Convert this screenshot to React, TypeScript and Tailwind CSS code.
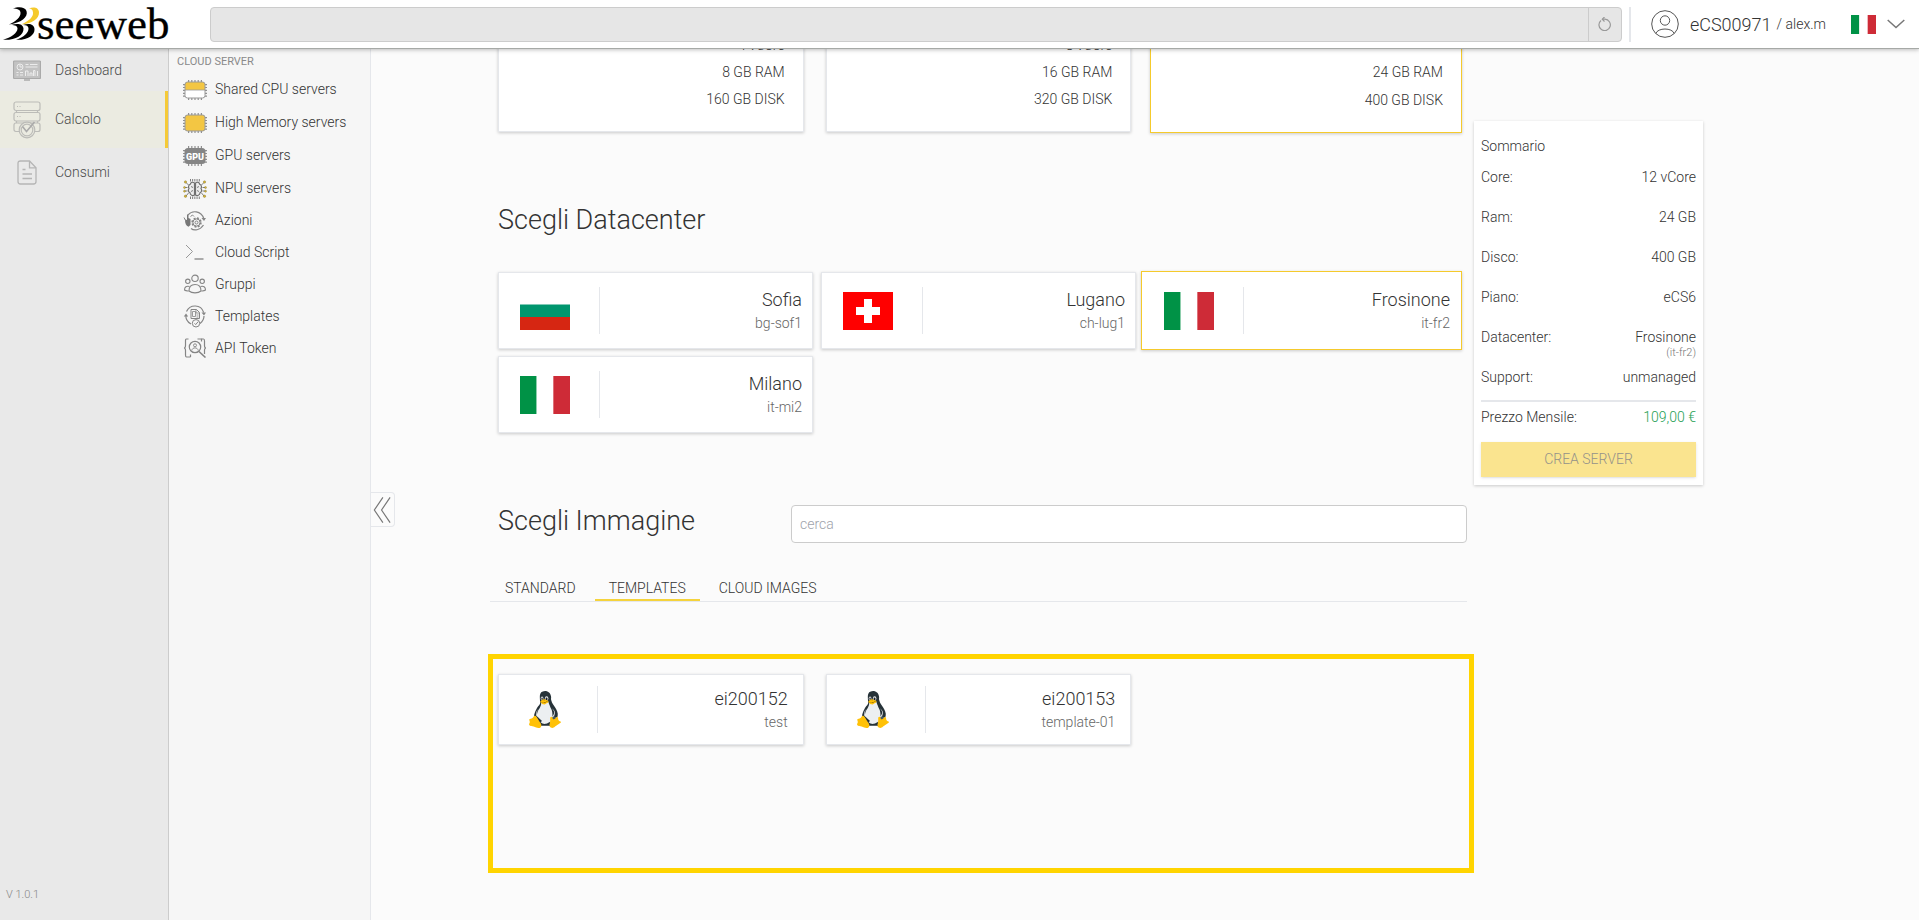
import type { ReactNode } from "react"
import { FcLinux } from "react-icons/fc"

const PINS = "#8f8f8f"

function Logo() {
  return (
    <a href="/" aria-label="seeweb" className="flex h-12 w-[200px] shrink-0 items-center pl-[3px]">
      <svg viewBox="0 0 170 48" className="h-12 w-[170px]">
        <path d="M10 8.500C15 6.500 22 6.500 23.500 11C25.500 17 18 23 6 24.500C13 21.500 18 17 17.500 12.500C17.200 9.500 14 8.500 10 8.500Z" fill="#000" />
        <path d="M26 8.500C30 6.500 35.500 7 36 12C36.500 18.500 29 24 18 24.500C26 21 30.500 17 30 12.500C29.700 9.500 28.500 8.500 26 8.500Z" fill="#f5ca2c" />
        <path d="M8 25C14 23 20 23.500 20.500 28.500C21 35.500 12 40.500 0 39.800C8 37.500 14.500 33 14.500 28.500C14.500 26 12 25 8 25Z" fill="#000" />
        <path d="M20 25C26 23 31 24 31.500 29C32 35.500 24 40.500 13 39.800C21 37 25.500 33 25.500 28.500C25.500 26 23.500 25 20 25Z" fill="#000" />
        <text x="34" y="39" fontFamily="'Liberation Serif', serif" fontSize="45" fill="#000" stroke="#000" strokeWidth="0.3">seeweb</text>
      </svg>
    </a>
  )
}

function Italy() {
  return (
    <svg viewBox="0 0 30 20" preserveAspectRatio="none" className="size-full">
      <path d="M0 0h10v20H0z" fill="#009246" />
      <path d="M10 0h10v20H10z" fill="#fff" />
      <path d="M20 0h10v20H20z" fill="#ce2b37" />
    </svg>
  )
}

function Bulgaria() {
  return (
    <svg viewBox="0 0 50 38" preserveAspectRatio="none" className="size-full">
      <path d="M0 0h50v13H0z" fill="#fff" />
      <path d="M0 12.500h50V25H0z" fill="#00966e" />
      <path d="M0 25h50v13H0z" fill="#d62612" />
    </svg>
  )
}

function Switzerland() {
  return (
    <svg viewBox="0 0 50 38" preserveAspectRatio="none" className="size-full">
      <path d="M0 0h50v38H0z" fill="#f00" />
      <path d="M21 7h8v8h8v8h-8v8h-8v-8h-8v-8h8z" fill="#fff" />
    </svg>
  )
}

function Chip({ children }: { children: ReactNode }) {
  return (
    <svg viewBox="0 0 24 20" className="h-5 w-6">
      <path d="M5 1h14M5 19h14" stroke={PINS} strokeWidth="2" strokeDasharray="1.200 2" />
      <path d="M1 4v13M23 4v13" stroke={PINS} strokeWidth="2" strokeDasharray="1.200 1.700" />
      {children}
    </svg>
  )
}

function SharedCpuIcon() {
  return (
    <Chip>
      <rect x="2" y="2" width="20" height="16" rx="2.500" fill="#fff" />
      <path d="M2 10V4.500A2.500 2.500 0 0 1 4.500 2h15A2.500 2.500 0 0 1 22 4.500V10z" fill="#f3c643" />
      <path d="M2 10h20" stroke="#999" strokeWidth="0.800" />
      <rect x="2" y="2" width="20" height="16" rx="2.500" fill="none" stroke="#999" />
    </Chip>
  )
}

function HighMemoryIcon() {
  return (
    <Chip>
      <rect x="2" y="2" width="20" height="16" rx="2.500" fill="#f3c643" stroke="#999" />
    </Chip>
  )
}

function GpuIcon() {
  return (
    <Chip>
      <rect x="1.500" y="2" width="21" height="16" rx="3.500" fill="#858585" />
      <text x="12" y="13.500" textAnchor="middle" fontFamily="Roboto, sans-serif" fontWeight="900" fontSize="9" fill="#fff">GPU</text>
    </Chip>
  )
}

function NpuIcon() {
  return (
    <svg viewBox="0 0 24 20" className="h-5 w-6" fill="none" stroke="#707070" strokeWidth="0.900">
      <path d="M7 1.200h11M7 18.800h11" strokeWidth="2.400" strokeDasharray="0.900 1.300" />
      <path d="M11.500 4C9.500 2.500 7.500 3.500 7.300 5.300C5.500 6 5 8 6 9.300C4.800 11 5.300 13 7 13.800C7 16.200 9.800 17.300 11.500 16zM12.500 4C14.500 2.500 16.500 3.500 16.700 5.300C18.500 6 19 8 18 9.300C19.200 11 18.700 13 17 13.800C17 16.200 14.200 17.300 12.500 16z" fill="#ececec" strokeWidth="1.200" />
      <path d="M8 7.500l2 1M8 12.500l2-1M16 7.500l-2 1M16 12.500l-2-1" />
      <path d="M5.500 6L3 3.500M4.500 8.500H1.500M4.500 12H1.500M5.500 14L3 17M18.500 6L21 3.500M19.500 8.500h3M19.500 12h3M18.500 14l2.500 3" />
      <g fill="#d8b52f" stroke="#7a7040" strokeWidth="0.400">
        <circle cx="2.500" cy="3" r="1.200" />
        <circle cx="1.500" cy="8.500" r="1" />
        <circle cx="1.500" cy="12.200" r="1" />
        <circle cx="2.500" cy="17.200" r="1.200" />
        <circle cx="21.500" cy="3" r="1.200" />
        <circle cx="22.500" cy="8.500" r="1" />
        <circle cx="22.500" cy="12.200" r="1" />
        <circle cx="21.500" cy="17.200" r="1.200" />
      </g>
    </svg>
  )
}

function ActionsIcon() {
  return (
    <svg viewBox="0 0 24 20" className="h-5 w-6" fill="none" stroke="#858585">
      <path d="M5 4C9-1 18-.5 20.800 7.500M20.500 14C17 19.500 11 20 8 17.500" strokeWidth="1.200" />
      <path d="M18.500 7h4.500l-2 3z" fill="#858585" stroke="none" />
      <path d="M2 8.500c0 4 1 6 3.500 7.200L7.500 14V8L5.500 7V3.500H4V9z" fill="#777" stroke="none" />
      <path d="M1 6.500l2 4M7.500 5.500l2-1.500 1.500 1.500" />
      <circle cx="13.500" cy="11.500" r="4.300" strokeWidth="1.800" strokeDasharray="1.900 1.470" />
      <circle cx="13.500" cy="11.500" r="3.600" />
      <circle cx="13.500" cy="11.500" r="1.500" />
    </svg>
  )
}

function ScriptIcon() {
  return (
    <svg viewBox="0 0 24 20" className="h-5 w-6" fill="none" stroke="#999">
      <path d="M3 3l6.500 6.500L3 16" />
      <path d="M11.500 17h9" strokeWidth="1.600" />
    </svg>
  )
}

function GroupsIcon() {
  return (
    <svg viewBox="0 0 24 20" className="h-5 w-6" fill="none" stroke="#858585" strokeWidth="1.100">
      <circle cx="12" cy="4.300" r="3.200" />
      <circle cx="4.800" cy="7.300" r="2.200" />
      <circle cx="19.200" cy="7.300" r="2.200" />
      <path d="M6 17c0-4 2-6.500 6-6.500s6 2.500 6 6.500c-3 2.500-9 2.500-12 0z" />
      <path d="M6.500 12.500c-3-1-5 .5-5 3.500 1 .8 2.500 1 4 .9M17.500 12.500c3-1 5 .5 5 3.500-1 .8-2.500 1-4 .9" />
    </svg>
  )
}

function TemplatesIcon() {
  return (
    <svg viewBox="0 0 24 23" className="h-[23px] w-6" fill="none" stroke="#858585">
      <path d="M3.500 6.500C7-1 18-1 20.700 7.500M3 10c-.5 4 1.500 7 5 9M21 11c0 3-1.500 5.500-4 7.500" strokeWidth="1.200" />
      <path d="M18.500 7.500h4.500l-2 3zM.8 11.500L3 8.500l2.200 3z" fill="#858585" stroke="none" />
      <path d="M8 13.500v-9h5.500l3 3v6z" />
      <path d="M9.500 6.500h3v5h-3zM13 4.500v3.500h3.500M13.500 10h2M13.500 12h2" strokeWidth="0.800" />
      <circle cx="13" cy="18.300" r="3.700" fill="#f6f6f6" />
      <path d="M11.500 18.300l1.200 1.300 2.500-3" />
    </svg>
  )
}

function TokenIcon() {
  return (
    <svg viewBox="0 0 24 20" className="h-5 w-6" fill="none" stroke="#858585" strokeWidth="1.200">
      <path d="M5.500 1H3.500C2.500 1 2.500 2 2.500 3v4.500c0 1.500-.5 2.500-1.500 2.500 1 0 1.500 1 1.500 2.500V17c0 1 0 2 1 2h4M18.500 1h2c1 0 1 1 1 2v4.500c0 1.500.5 2.500 1.500 2.500-1 0-1.500 1-1.500 2.500V16" />
      <path d="M14.500 1h4v2.500M7.500 19v-2.500" />
      <circle cx="12" cy="9" r="5.700" />
      <path d="M16 13.500l6.500 6" strokeWidth="1.600" />
      <circle cx="12" cy="7.300" r="1.500" strokeWidth="0.900" />
      <path d="M8.800 12.500c.4-3.500 6-3.500 6.400 0" strokeWidth="0.900" />
    </svg>
  )
}

function DashboardIcon() {
  return (
    <svg viewBox="0 0 28 21" className="h-[21px] w-7" fill="none" stroke="#aaa">
      <rect x="0.500" y="1" width="27" height="17.500" rx="1" fill="#c2c2c2" strokeWidth="1.200" />
      <path d="M11 20h6" strokeWidth="1.500" />
      <g stroke="#ececec">
        <circle cx="7" cy="7" r="3" />
        <path d="M7 4.500V7h2.500M12.500 4.500h3M17 4.500h7.500M12.500 7h12M3.500 12.500h2M7 12.500h3M3.500 15h2M7 15h3" />
        <path d="M12.500 16v-5h2.500v5M17 16v-3h2v3M20.500 16v-5.500h1.500V16M24.500 16v-5" />
      </g>
    </svg>
  )
}

function ComputeIcon() {
  return (
    <svg viewBox="0 0 28 38" className="h-[38px] w-7" fill="none" stroke="#bcbcb8" strokeWidth="1.200">
      <rect x="1" y="1" width="26" height="8.500" rx="2" />
      <path d="M3.500 9.500v2M24.500 9.500v2M3.500 20v2M24.500 20v2" />
      <rect x="1" y="11.500" width="26" height="8.500" rx="2" />
      <path d="M6 30.500H3c-1.500 0-2-.8-2-2V24c0-1.500.8-2 2-2h22c1.500 0 2 .8 2 2v4.500c0 1.500-.8 2-2 2h-3" />
      <path d="M4 5.500h1M6.500 5.500h1M4 15.500h1M6.500 15.500h1" />
      <circle cx="14" cy="29" r="7.800" fill="#ebebe1" />
      <circle cx="14" cy="29" r="5.800" />
      <path d="M9.500 25.500l4 5L21.500 21" stroke="#aaa" strokeWidth="1.600" />
    </svg>
  )
}

function BillingIcon() {
  return (
    <svg viewBox="0 0 20 25" className="h-[25px] w-5" fill="none" stroke="#b5b5b5" strokeWidth="1.300">
      <path d="M12.500 1H3.500C1.800 1 1 1.800 1 3.500v18C1 23.200 1.800 24 3.500 24h13c1.700 0 2.500-.8 2.500-2.500V7.800z" />
      <path d="M12.500 1v6.800H19M5.500 9.500h3M5.500 14h9.500M5.500 18.500h9.500" />
    </svg>
  )
}

const sections = [
  { label: "Dashboard", icon: <DashboardIcon />, row: "h-[42px]" },
  { label: "Calcolo", icon: <ComputeIcon />, row: "h-[57px] border-r-[3px] border-[#f5ca37] bg-[#ebebe1]" },
  { label: "Consumi", icon: <BillingIcon />, row: "h-12" },
]

const services = [
  { label: "Shared CPU servers", icon: <SharedCpuIcon />, row: "h-[33px]" },
  { label: "High Memory servers", icon: <HighMemoryIcon />, row: "h-[33px]" },
  { label: "GPU servers", icon: <GpuIcon />, row: "h-[33px]" },
  { label: "NPU servers", icon: <NpuIcon />, row: "h-[33px]" },
  { label: "Azioni", icon: <ActionsIcon />, row: "h-[31px]" },
  { label: "Cloud Script", icon: <ScriptIcon />, row: "h-8" },
  { label: "Gruppi", icon: <GroupsIcon />, row: "h-8" },
  { label: "Templates", icon: <TemplatesIcon />, row: "h-8" },
  { label: "API Token", icon: <TokenIcon />, row: "h-8" },
]

const plans = [
  { core: "4 vCore", ram: "8 GB RAM", disk: "160 GB DISK" },
  { core: "8 vCore", ram: "16 GB RAM", disk: "320 GB DISK" },
  { core: "12 vCore", ram: "24 GB RAM", disk: "400 GB DISK", selected: true },
]

const datacenters = [
  { name: "Sofia", code: "bg-sof1", flag: <Bulgaria /> },
  { name: "Lugano", code: "ch-lug1", flag: <Switzerland /> },
  { name: "Frosinone", code: "it-fr2", flag: <Italy />, selected: true },
  { name: "Milano", code: "it-mi2", flag: <Italy /> },
]

const templates = [
  { name: "ei200152", note: "test" },
  { name: "ei200153", note: "template-01" },
]

const summary = [
  { label: "Core:", value: "12 vCore" },
  { label: "Ram:", value: "24 GB" },
  { label: "Disco:", value: "400 GB" },
  { label: "Piano:", value: "eCS6" },
  { label: "Datacenter:", value: "Frosinone", note: "(it-fr2)" },
  { label: "Support:", value: "unmanaged" },
]

function Header() {
  return (
    <header className="z-10 flex h-[49px] shrink-0 items-center border-b border-[#a6a9a6] bg-white shadow-[0_1px_4px_rgba(0,0,0,0.25)]">
      <Logo />
      <div className="ml-[10px] flex h-[35px] flex-1 rounded border border-[#ccc] bg-[#e6e6e6]">
        <input aria-label="Cerca nel pannello" className="min-w-0 flex-1 bg-transparent px-3 outline-none" />
        <button aria-label="Aggiorna" className="flex w-[33px] items-center justify-center border-l border-[#ccc]">
          <svg viewBox="0 0 14 14" className="size-[14px]" fill="none" stroke="#999" strokeWidth="1.200">
            <path d="M3 3.500A5.700 5.700 0 1 0 7 2.200H4.500" />
            <path d="M6.500 0L4.300 2.200 6.500 4.500" />
          </svg>
        </button>
      </div>
      <div className="ml-[7px] h-[35px] w-[2px] bg-gray-200" />
      <a href="#account" className="ml-5 flex items-center">
        <svg viewBox="0 0 28 28" className="size-7" fill="none" stroke="#555">
          <circle cx="14" cy="14" r="13.300" />
          <circle cx="14" cy="10.500" r="4.700" />
          <path d="M4.800 23.600C6.500 17.500 21.500 17.500 23.200 23.600" />
        </svg>
        <span className="ml-[11px] text-[18px] text-[#333]">eCS00971</span>
        <span className="ml-[5px] text-[14px] text-[#333]">/ alex.m</span>
      </a>
      <button aria-label="Lingua" className="mr-[14px] ml-[25px] flex items-center gap-[11px]">
        <span className="block h-[19px] w-[25px]"><Italy /></span>
        <svg viewBox="0 0 18 10" className="h-[10px] w-[18px]" fill="none" stroke="#777" strokeWidth="1.500">
          <path d="M.7 1L9 8.500 17.300 1" />
        </svg>
      </button>
    </header>
  )
}

function Summary() {
  return (
    <aside className="mt-[72px] w-[229px] shrink-0 self-start bg-white px-[7px] pt-[14px] pb-2 text-[14px] shadow-[0_1px_3px_rgba(0,0,0,0.2)]">
      <h2 className="leading-[22px]">Sommario</h2>
      <dl className="mt-[9px]">
        {summary.map((item) => (
          <div key={item.label} className="flex h-10 justify-between leading-[22px]">
            <dt>{item.label}</dt>
            <dd className="text-right">
              {item.value}
              {item.note && <span className="block text-[11px] leading-[10px] text-[#777]">{item.note}</span>}
            </dd>
          </div>
        ))}
        <div className="-mt-[6px] flex justify-between border-t-2 border-gray-200 pt-1 leading-[22px]">
          <dt>Prezzo Mensile:</dt>
          <dd className="text-[#26a055]">109,00 €</dd>
        </div>
      </dl>
      <button className="mt-[14px] h-[35px] w-full bg-[#fae48f] text-[#94928a] shadow-sm">CREA SERVER</button>
    </aside>
  )
}

export default function App() {
  return (
    <div className="flex h-screen flex-col overflow-hidden bg-[#fbfbfb] font-[Roboto,sans-serif] font-light text-[#333]">
      <Header />
      <div className="flex min-h-0 flex-1">
        <nav className="flex w-[169px] shrink-0 flex-col border-r border-[#ccc] bg-[#e9e9e9] text-[14px]">
          {sections.map((s) => (
            <a key={s.label} href={"#" + s.label} className={`flex items-center text-[#4a4a4a] ${s.row}`}>
              <span className="flex w-[55px] shrink-0 justify-center pr-[1px]">{s.icon}</span>
              {s.label}
            </a>
          ))}
          <span className="mt-auto mb-[17px] ml-[6px] text-[11px] text-[#888]">V 1.0.1</span>
        </nav>
        <nav className="w-[202px] shrink-0 border-r border-gray-200 bg-[#f6f6f6]">
          <h2 className="pt-1 pl-2 text-[11px] leading-[18px] font-normal text-[#8a8a8a]">CLOUD SERVER</h2>
          <div className="pt-[2px] text-[14px]">
            {services.map((s) => (
              <a key={s.label} href={"#" + s.label} className={`flex items-center gap-2 pl-[14px] ${s.row}`}>
                {s.icon}
                {s.label}
              </a>
            ))}
          </div>
        </nav>
        <main className="flex min-w-0 flex-1 overflow-hidden pr-[216px]">
          <button aria-label="Chiudi menu" className="mt-[443px] h-[35px] w-6 shrink-0 self-start rounded-r border border-l-0 border-gray-200">
            <svg viewBox="0 0 20 30" className="h-[30px] w-5 pl-[2px]" fill="none" stroke="#777" strokeWidth="1.300">
              <path d="M11 1L1.500 15 11 29M19 1L9.500 15 19 29" />
            </svg>
          </button>
          <div className="ml-[95px] flex min-w-0 flex-1 gap-[7px]">
            <div className="min-w-0 flex-1">
              <div className="-mt-[18px] grid grid-cols-3 gap-[22px] px-2 text-[14px]">
                {plans.map((p) => (
                  <button
                    key={p.ram}
                    className={`flex flex-col items-end border bg-white pr-[18px] pb-[18px] text-right shadow-[0_1px_3px_rgba(0,0,0,0.2)] ${
                      p.selected ? "-mx-[3px] -mt-[2px] -mb-px border-[#f5ca2c] leading-[28px]" : "border-gray-200 leading-[27px]"
                    }`}
                  >
                    <span>{p.core}</span>
                    <span>{p.ram}</span>
                    <span>{p.disk}</span>
                  </button>
                ))}
              </div>

              <h1 className="mt-[68px] px-2 text-[27px] leading-[40px]">Scegli Datacenter</h1>
              <div className="mt-[32px] grid grid-cols-3 gap-x-2 gap-y-[7px] px-2">
                {datacenters.map((d) => (
                  <button
                    key={d.code}
                    className={`flex items-center border bg-white shadow-[0_1px_3px_rgba(0,0,0,0.2)] ${
                      d.selected ? "-mx-[3px] -my-px h-[79px] border-[#f5ca2c] px-[11px]" : "h-[77px] border-gray-200 px-[10px]"
                    }`}
                  >
                    <span className="ml-[11px] block h-[38px] w-[50px]">{d.flag}</span>
                    <span className="ml-[29px] h-[47px] w-px bg-gray-200" />
                    <span className="ml-auto text-right">
                      <span className="block text-[18px] leading-6">{d.name}</span>
                      <span className="block text-[14px] leading-[22px] text-[#666]">{d.code}</span>
                    </span>
                  </button>
                ))}
              </div>

              <div className="mt-[72px] flex items-center pl-2">
                <h1 className="w-[293px] shrink-0 pb-[6px] text-[27px] leading-8">Scegli Immagine</h1>
                <input
                  aria-label="Cerca immagine"
                  placeholder="cerca"
                  className="h-[38px] min-w-0 flex-1 rounded border border-[#ccc] bg-white px-2 text-[14px] outline-none placeholder:text-[#a0a3ab]"
                />
              </div>
              <div role="tablist" className="mt-[34px] flex border-b border-gray-200 text-[14px] leading-[22px]">
                <button role="tab" className="border-b-2 border-transparent pr-[19px] pl-[15px]">STANDARD</button>
                <button role="tab" aria-selected="true" className="border-b-2 border-[#f5d33c] px-[14px]">TEMPLATES</button>
                <button role="tab" className="border-b-2 border-transparent px-[19px]">CLOUD IMAGES</button>
              </div>

              <div className="mt-[52px] -mr-[7px] -ml-[2px] min-h-[219px] border-[5px] border-[#ffd400] pt-[15px] pr-[10px] pl-[5px]">
                <div className="grid grid-cols-3 gap-[22px]">
                  {templates.map((t) => (
                    <button key={t.name} className="flex h-[71px] items-center border border-gray-200 bg-white px-[15px] shadow-[0_1px_3px_rgba(0,0,0,0.2)]">
                      <FcLinux className="ml-[6px] size-[49px]" />
                      <span className="ml-7 h-[47px] w-px bg-gray-200" />
                      <span className="ml-auto text-right">
                        <span className="block text-[18px] leading-6">{t.name}</span>
                        <span className="block text-[14px] leading-[22px] text-[#666]">{t.note}</span>
                      </span>
                    </button>
                  ))}
                </div>
              </div>
            </div>
            <Summary />
          </div>
        </main>
      </div>
    </div>
  )
}
